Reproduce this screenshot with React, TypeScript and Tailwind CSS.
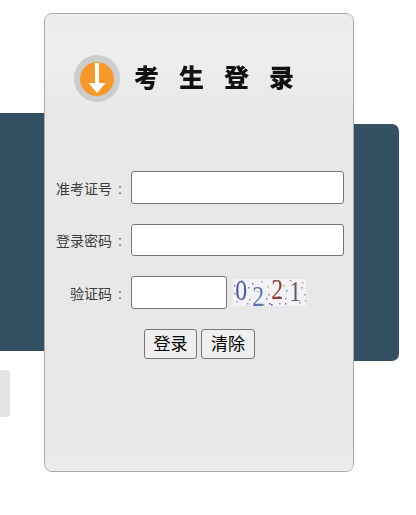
const cjk = "font-['Liberation_Sans','Noto_Sans_CJK_SC',sans-serif]";

const dots: [number, number, string][] = [
  [1,6,"#6a6ac8"],[1,14,"#c87a7a"],[3,22,"#8a8ad8"],[8,1,"#9a9ae0"],[15,8,"#7a7ac0"],[16,20,"#d08080"],[19,4,"#6f6fc8"],
  [14,24,"#9090d8"],[24,12,"#c89090"],[28,2,"#a0a0e0"],[33,19,"#7070c0"],[34,7,"#d09090"],[36,24,"#4a4ab8"],[38,25,"#4a4ab8"],
  [41,1,"#8080d0"],[35,15,"#c07070"],[46,24,"#8080c8"],[50,6,"#d08888"],[52,24,"#b06060"],[53,11,"#7a7ac8"],[57,1,"#c88080"],
  [52,19,"#9090d0"],[68,8,"#c07878"],[66,23,"#8888d0"],[69,3,"#d09090"],[71,15,"#9090d8"],[72,21,"#c07070"],[45,17,"#8888d0"],[30,25,"#c88080"],
];

function Digit({ className, children }: { className: string; children: string }) {
  return <span className={`absolute scale-x-[0.82] ${className}`}>{children}</span>;
}

function Captcha() {
  return (
    <div className="relative w-[73px] h-[27px] bg-[#f3f2f6] font-['Liberation_Serif',serif] text-[29px] leading-[29px]">
      <svg className="absolute inset-0" width="73" height="27" viewBox="0 0 73 27">
        {dots.map(([x, y, c], i) => (
          <rect key={i} x={x} y={y} width="1.5" height="1.5" fill={c} />
        ))}
      </svg>
      <Digit className="left-[1px] top-[-3px] text-[#4a5a9c]">0</Digit>
      <Digit className="left-[18px] top-[3px] text-[#5a74b0]">2</Digit>
      <Digit className="left-[37px] top-[-4px] text-[#8c4038]">2</Digit>
      <Digit className="left-[55px] top-[-2px] text-[#6a5a5a]">1</Digit>
    </div>
  );
}

function Label({ children }: { children: string }) {
  return (
    <label className="w-[86px] shrink-0 flex justify-end pr-[4px] pt-[3px] text-[14px] text-[#3c3c3c] whitespace-nowrap">
      <span className="mr-[1px]">{children}</span>
      <span className="w-[14px] text-center">:</span>
    </label>
  );
}

const inputClass = "h-full bg-white border border-[#767676] rounded-[3px]";
const btnClass = "h-[30px] bg-[#efefef] border border-[#767676] rounded-[3px] text-[17px] leading-none text-black";

export default function App() {
  return (
    <div className={`relative w-[416px] h-[515px] bg-white overflow-hidden ${cjk} pt-[13px] pl-[44px]`}>
      <div className="absolute left-0 top-[113px] w-[60px] h-[238px] bg-[#345063]" />
      <div className="absolute left-[340px] top-[124px] w-[59px] h-[237px] bg-[#345063] rounded-r-[7px]" />
      <div className="absolute left-0 top-[370px] w-[10px] h-[47px] bg-[#e3e3e3] rounded-r-[4px]" />

      <div className="relative w-[310px] h-[459px] bg-[#e8e8e8] border border-[#aaaaaa] rounded-[8px] overflow-hidden flex flex-col">
        <div className="h-[100px] shrink-0 pt-[41px] pl-[29px] flex items-start bg-gradient-to-b from-[#ececec] via-[#ededed] to-[#e8e8e8]">
          <div className="w-[46px] h-[47px] rounded-full bg-[#cdcdcd] flex items-center justify-center shrink-0">
            <div className="w-[34px] h-[34px] rounded-full bg-[#f6992c] flex items-center justify-center overflow-hidden">
              <svg width="20" height="32" viewBox="0 0 20 32" fill="#ffffff">
                <path d="M8 0h4v20h6.5L10 30 1.5 20H8z" />
              </svg>
            </div>
          </div>
          <div className="ml-[14px] mt-[5px] flex gap-[20px] text-[25px] leading-[32px] font-black text-[#111] blur-[0.4px] font-['Noto_Sans_CJK_SC',sans-serif]">
            <span>考</span><span>生</span><span>登</span><span>录</span>
          </div>
        </div>

        <div className="pt-[57px] flex-1">
          <div className="flex items-center h-[33px]">
            <Label>准考证号</Label>
            <div className={`${inputClass} w-[213px]`} />
          </div>
          <div className="flex items-center h-[32px] mt-[20px]">
            <Label>登录密码</Label>
            <div className={`${inputClass} w-[213px]`} />
          </div>
          <div className="flex items-center h-[33px] mt-[20px]">
            <Label>验证码</Label>
            <div className={`${inputClass} w-[96px]`} />
            <div className="ml-[6px]"><Captcha /></div>
          </div>
          <div className="flex gap-[4px] mt-[20px] pl-[99px]">
            <button className={`${btnClass} w-[53px]`}>登录</button>
            <button className={`${btnClass} w-[54px]`}>清除</button>
          </div>
        </div>
        <div className="h-[26px] shrink-0 bg-gradient-to-b from-[#e8e8e8] to-[#ececec]" />
      </div>
    </div>
  );
}
